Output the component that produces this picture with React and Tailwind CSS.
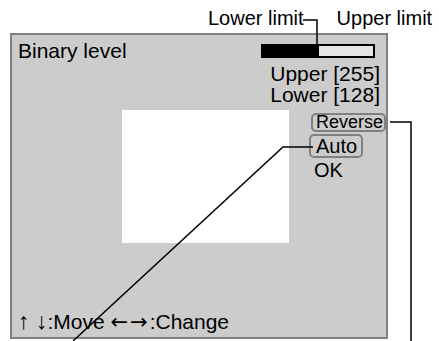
import React from "react";

const App = () => {
  return (
    <div className="relative w-[439px] h-[341px] overflow-hidden bg-white text-black font-['Liberation_Sans','DejaVu_Sans',sans-serif]">
      {/* callout labels */}
      <div className="flex h-[33px] pt-[6px] pl-[208px] text-[20px] leading-[24px]">
        <span>Lower limit</span>
        <span className="ml-[33px]">Upper limit</span>
      </div>

      {/* monitor screen */}
      <div className="ml-[10px] flex h-[306px] w-[378px] flex-col border-2 border-[#808080] bg-[#cccccc]">
        <div className="flex items-start justify-between pt-[4px] pl-[6px] pr-[11px]">
          <span className="text-[21px] leading-[24px]">Binary level</span>
          <div className="mt-[5px] flex h-[14px] w-[114px] border-2 border-black bg-[#e6e6e6]">
            <div className="h-full w-[56px] bg-black" />
          </div>
        </div>

        <div className="flex flex-col items-end pr-[6px] text-[21px] leading-[21px]">
          <span>Upper [255]</span>
          <span>Lower [128]</span>
        </div>

        <div className="flex items-start">
          <div className="ml-[110px] mt-[5px] h-[133px] w-[171px] bg-white" />
          <div className="ml-[20px] mt-[8px] flex flex-col items-start">
            <span className="ml-[2px] rounded-[5px] border-2 border-[#808080] pl-[3px] pr-[1px] text-[18px] leading-[15px]">
              Reverse
            </span>
            <span className="mt-[2px] rounded-[5px] border-2 border-[#808080] pl-[5px] pr-[4px] text-[20px] leading-[20px]">
              Auto
            </span>
            <span className="ml-[5px] text-[20px] leading-[24px]">OK</span>
          </div>
        </div>

        <div className="mt-auto pb-[3px] pl-[6px] text-[21px] leading-[24px]">
          <span className="text-[23px]">{"\u2191\uFE0E \u2193\uFE0E"}</span>:Move{" "}
          <span className="font-['DejaVu_Sans',sans-serif] tracking-[2px]">{"\u2190\uFE0E\u2192\uFE0E"}</span>:Change
        </div>
      </div>

      {/* leader lines */}
      <svg className="pointer-events-none absolute inset-0" width="439" height="341" viewBox="0 0 439 341">
        <g fill="none" stroke="#000" strokeWidth="1.5">
          <polyline points="303,20 317,20 317,44" />
          <polyline points="390,122 411,122 411,341" />
          <polyline points="313,147 283,147 73,341" />
        </g>
      </svg>
    </div>
  );
};

export default App;
